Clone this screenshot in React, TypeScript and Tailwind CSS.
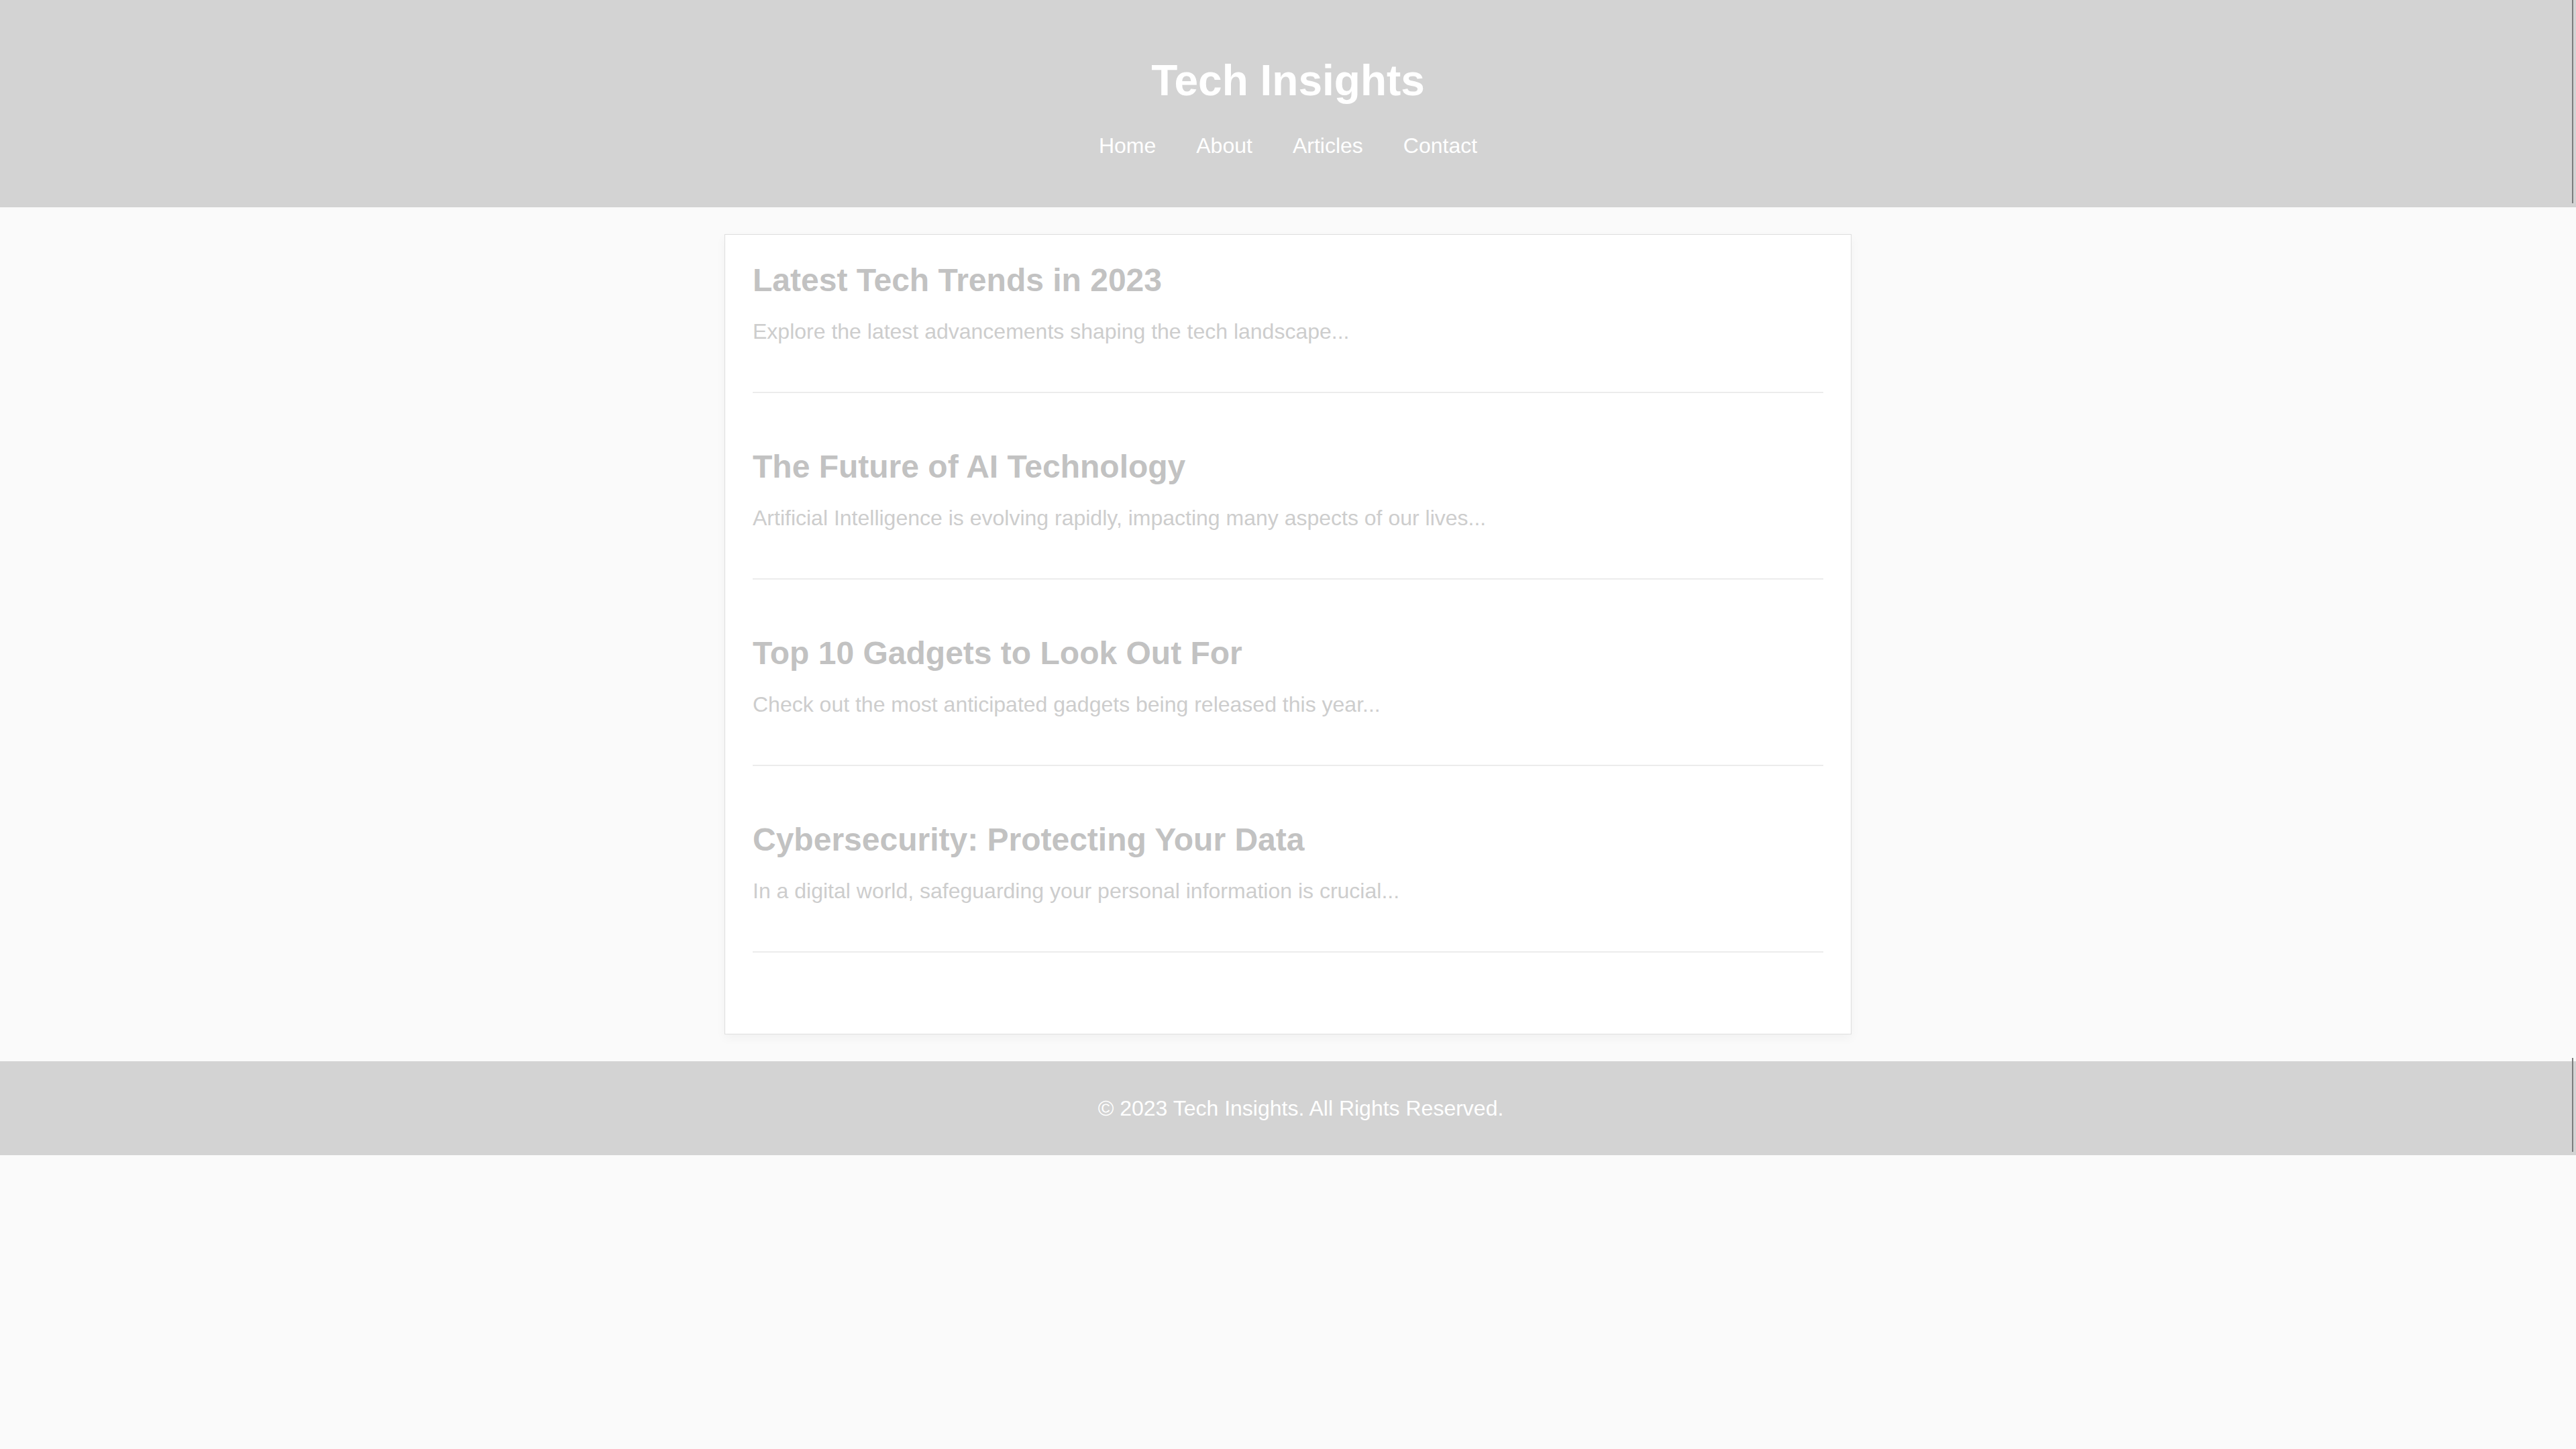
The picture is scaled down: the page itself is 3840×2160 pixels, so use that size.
import React from 'react';

const articles = [
  {
    title: 'Latest Tech Trends in 2023',
    summary: 'Explore the latest advancements shaping the tech landscape...',
  },
  {
    title: 'The Future of AI Technology',
    summary: 'Artificial Intelligence is evolving rapidly, impacting many aspects of our lives...',
  },
  {
    title: 'Top 10 Gadgets to Look Out For',
    summary: 'Check out the most anticipated gadgets being released this year...',
  },
  {
    title: 'Cybersecurity: Protecting Your Data',
    summary: 'In a digital world, safeguarding your personal information is crucial...',
  },
];

const navLinks = ['Home', 'About', 'Articles', 'Contact'];

const App: React.FC = () => {
  return (
    <div className="min-h-screen bg-[#fafafa] font-['Liberation_Sans',Arial,sans-serif]">
      {/* Header */}
      <header className="relative bg-[#d3d3d3] text-white text-center pt-[40px] pb-[73px]">
        <h1 className="mt-[43px] text-[64px] leading-[74px] font-bold">Tech Insights</h1>
        <nav className="mt-[42px]">
          <ul className="flex justify-center gap-[60px] text-[32px] leading-[37px]">
            {navLinks.map((link) => (
              <li key={link}>
                <a href="#" className="text-white">
                  {link}
                </a>
              </li>
            ))}
          </ul>
        </nav>
        <span className="absolute right-[4px] top-0 bottom-[6px] w-[2px] bg-[#7d7d7d]" />
      </header>

      {/* Article list */}
      <main className="mt-[40px] mx-auto w-[1680px] bg-white border border-[#dedede] px-[41px] pt-[40px] pb-[39px] shadow-[0_6px_14px_rgba(0,0,0,0.04)]">
        {articles.map((article) => (
          <article
            key={article.title}
            className="pb-[71px] mb-[82px] border-b-2 border-[#ececec]"
          >
            <h2 className="text-[48px] leading-[55px] font-bold text-[#c2c2c2]">
              {article.title}
            </h2>
            <p className="mt-[31px] text-[32px] leading-[37px] text-[#cdcdcd]">
              {article.summary}
            </p>
          </article>
        ))}
      </main>

      {/* Footer */}
      <footer className="relative mt-[40px] h-[140px] bg-[#d3d3d3] text-white flex items-center justify-center pl-[38px]">
        <p className="text-[32px] leading-[37px]">© 2023 Tech Insights. All Rights Reserved.</p>
        <span className="absolute right-[4px] top-[-5px] bottom-[5px] w-[2px] bg-[#7d7d7d]" />
      </footer>
    </div>
  );
};

export default App;
